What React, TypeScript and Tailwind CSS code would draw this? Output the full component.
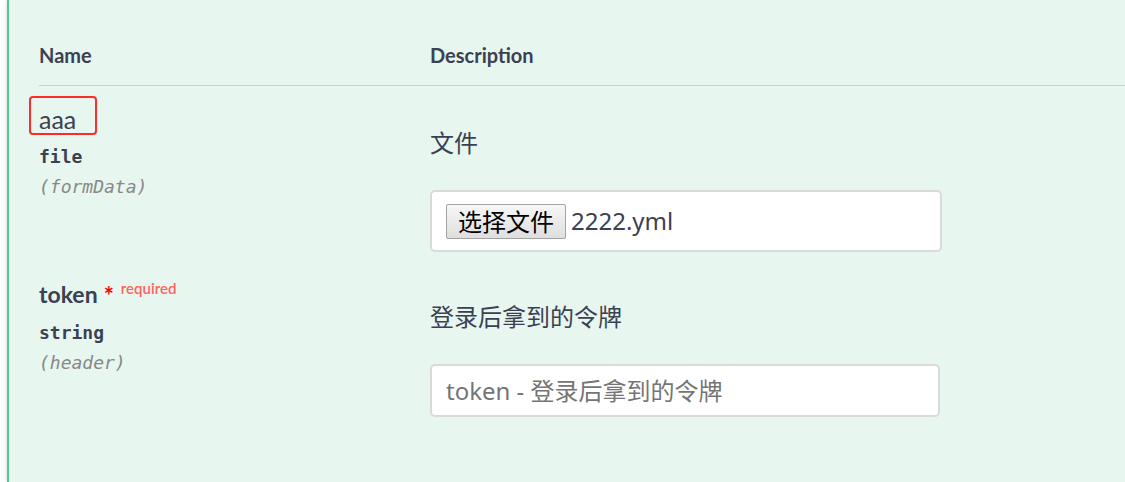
import React from "react";

const text = "text-[#3b4151]";

export default function App() {
  return (
    <div className="w-[1125px] h-[482px] bg-white pl-[7px] overflow-hidden">
      <div className="h-full w-[1130px] bg-[#e7f6ef] border-l-2 border-[#49cc90] shadow-[0_0_4px_rgba(0,0,0,0.19)] pl-[30px]">
        {/* Header */}
        <div className={`flex border-b border-[#c7d3ce] pt-[43px] pb-[18px] font-['Lato',sans-serif] font-bold text-[20px] leading-[24px] ${text}`}>
          <div className="w-[391px]">Name</div>
          <div>Description</div>
        </div>

        {/* Row 1 */}
        <div className="flex pb-[13px]">
          <div className="w-[391px] flex flex-col items-start">
            <div className={`relative mt-[18px] font-['Lato',sans-serif] text-[25px] leading-[30px] ${text}`}>
              aaa
              <div className="absolute left-[-10px] top-[-8px] w-[68px] h-[39px] border-2 border-[#ff2b2b] rounded-[4px]" />
            </div>
            <div className={`mt-[13px] font-['DejaVu_Sans_Mono',monospace] font-bold text-[18px] leading-[20px] ${text}`}>
              file
            </div>
            <div className="mt-[10px] font-['DejaVu_Sans_Mono',monospace] italic text-[18px] leading-[20px] text-[#888888]">
              (formData)
            </div>
          </div>
          <div className="flex flex-col items-start font-['Noto_Sans','Noto_Sans_CJK_SC',sans-serif]">
            <div className={`mt-[42px] text-[24px] leading-[30px] ${text}`}>文件</div>
            <div className="mt-[32px] w-[512px] h-[62px] bg-white border-2 border-[#dadada] rounded-[5px] flex items-center pl-[14px]">
              <button className="h-[35px] w-[120px] border border-[#a3a3a3] rounded-[2px] bg-gradient-to-b from-[#f7f7f7] to-[#dedede] text-black text-[24px] leading-[30px] font-['Noto_Sans_CJK_SC','Noto_Sans',sans-serif]">
                选择文件
              </button>
              <span className={`ml-[5px] text-[24px] leading-[30px] ${text}`}>2222.yml</span>
            </div>
          </div>
        </div>

        {/* Row 2 */}
        <div className="flex">
          <div className="w-[391px] flex flex-col items-start">
            <div className={`mt-[14px] flex items-baseline font-['Lato',sans-serif] leading-[30px] ${text}`}>
              <span className="text-[23px] font-bold">token</span>
              <span className="ml-[6px] relative top-[2px] text-[24px] font-bold text-[#ff0000]">*</span>
              <span className="ml-[7px] relative top-[-9px] text-[15px] font-semibold text-[#ff6260]">required</span>
            </div>
            <div className={`mt-[11px] font-['DejaVu_Sans_Mono',monospace] font-bold text-[18px] leading-[20px] ${text}`}>
              string
            </div>
            <div className="mt-[10px] font-['DejaVu_Sans_Mono',monospace] italic text-[18px] leading-[20px] text-[#888888]">
              (header)
            </div>
          </div>
          <div className="flex flex-col items-start font-['Noto_Sans','Noto_Sans_CJK_SC',sans-serif]">
            <div className={`mt-[37px] text-[24px] leading-[30px] ${text}`}>登录后拿到的令牌</div>
            <input
              className={`mt-[32px] w-[510px] h-[53px] bg-white border-2 border-[#dadada] rounded-[5px] pl-[14px] text-[24px] outline-none placeholder:text-[#757575] ${text}`}
              placeholder="token - 登录后拿到的令牌"
            />
          </div>
        </div>
      </div>
    </div>
  );
}
